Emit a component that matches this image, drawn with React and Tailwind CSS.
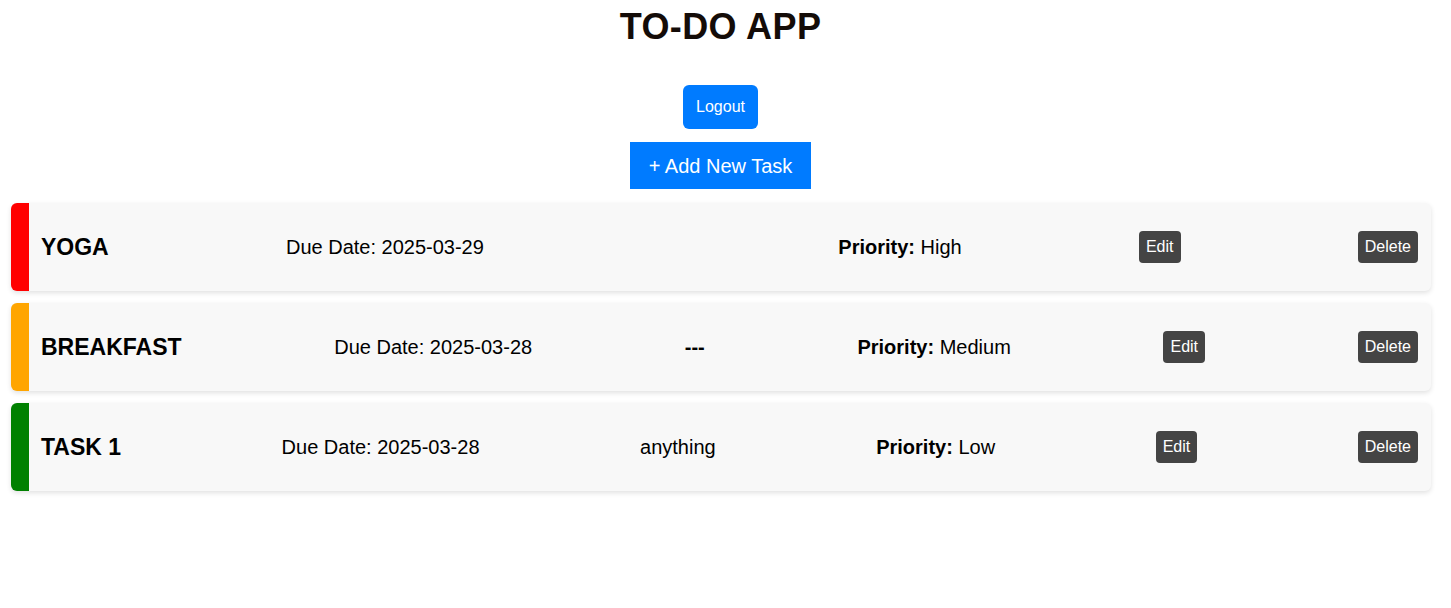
import React from "react";

const tasks = [
  { title: "YOGA", due: "2025-03-29", desc: "", descBold: false, priority: "High", color: "border-l-[#ff0000]" },
  { title: "BREAKFAST", due: "2025-03-28", desc: "---", descBold: true, priority: "Medium", color: "border-l-[#ffa500]" },
  { title: "TASK 1", due: "2025-03-28", desc: "anything", descBold: false, priority: "Low", color: "border-l-[#008000]" },
];

function TaskCard({ task }) {
  return (
    <div
      className={`flex h-[88px] items-center justify-between rounded-md border-l-[18px] ${task.color} bg-[#f8f8f8] pl-3 pr-[13px] text-[20px] text-black shadow-[0_2px_5px_rgba(0,0,0,0.12)]`}
    >
      <h3 className="text-[23px] font-bold">{task.title}</h3>
      <p>Due Date: {task.due}</p>
      <p className={task.descBold ? "font-bold" : ""}>{task.desc}</p>
      <p>
        <span className="font-bold">Priority:</span> {task.priority}
      </p>
      <button className="h-[32px] rounded bg-[#444] px-[7px] text-[16px] text-white">Edit</button>
      <button className="h-[32px] rounded bg-[#444] px-[7px] text-[16px] text-white">Delete</button>
    </div>
  );
}

export default function App() {
  return (
    <div className="min-h-screen bg-white font-['Liberation_Sans',Arial,sans-serif]">
      <div className="ml-[10px] w-[1421px] pt-[6px]">
        <h1 className="text-center text-[36px] font-bold leading-[41px] tracking-[0.4px] text-[#140c08]">TO-DO APP</h1>

        <div className="mt-[38px] flex flex-col items-center">
          <button className="h-[44px] w-[75px] rounded-md bg-[#007bff] text-[16px] text-white">Logout</button>
          <button className="mt-[13px] h-[47px] w-[181px] bg-[#007bff] text-[20px] text-white">+ Add New Task</button>
        </div>

        <div className="ml-px mt-[14px] flex flex-col gap-[12px]">
          {tasks.map((t) => (
            <TaskCard key={t.title} task={t} />
          ))}
        </div>
      </div>
    </div>
  );
}
